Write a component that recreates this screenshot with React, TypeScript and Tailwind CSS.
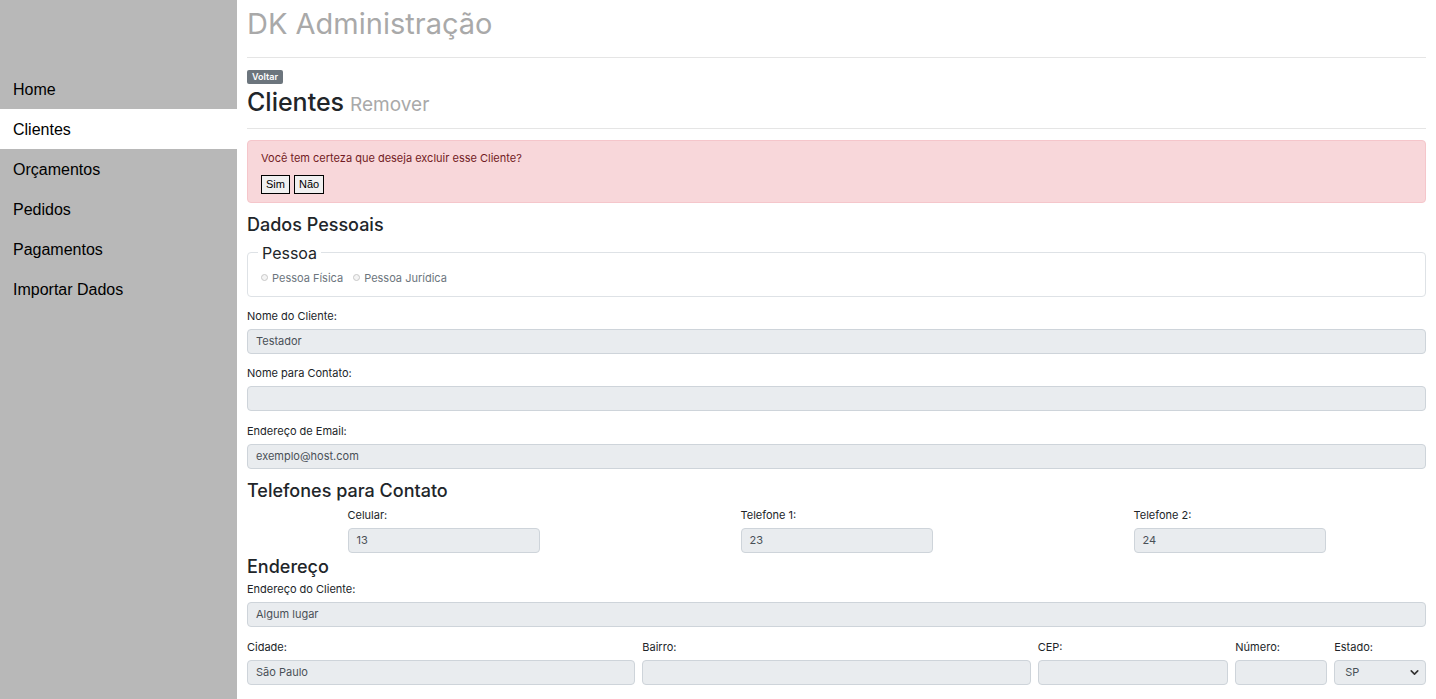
import { ChevronDown } from "lucide-react";

const NAV = ["Home", "Clientes", "Orçamentos", "Pedidos", "Pagamentos", "Importar Dados"];

function Field({ label, value, className = "" }: { label: string; value?: string; className?: string }) {
  return (
    <div className={className}>
      <div className="text-[11px] leading-[14px] text-[#212529] mb-[6px]">{label}</div>
      <div className="h-[25px] rounded-[4px] border border-[#ced4da] bg-[#e9ecef] px-[8px] flex items-center text-[11px] text-[#495057]">
        {value}
      </div>
    </div>
  );
}

export default function App() {
  return (
    <div className="flex min-h-[699px] font-['Inter',sans-serif] text-[#212529] bg-white">
      <aside className="w-[237px] shrink-0 bg-[#b8b8b8] pt-[69px] font-['Liberation_Sans',sans-serif]">
        {NAV.map((n) => (
          <div
            key={n}
            className={`h-[40px] flex items-center pl-[13px] pt-[2px] text-[16px] text-black ${n === "Clientes" ? "bg-white" : ""}`}
          >
            {n}
          </div>
        ))}
      </aside>

      <main className="flex-1 px-[10px] pb-4">
        <h1 className="text-[29px] leading-[38px] pt-[5px] text-[#a9a9a9] pb-[14px] border-b border-[#e5e5e5]">
          DK Administração
        </h1>

        <div className="mt-[12px] h-[14px] flex">
          <span className="inline-block bg-[#6c757d] text-white text-[9px] font-semibold leading-[14px] px-[5px] rounded-[2px]">
            Voltar
          </span>
        </div>
        <div className="flex items-baseline gap-[6px] pb-[8px] border-b border-[#e5e5e5] mt-[3px]">
          <span className="text-[25px] leading-[30px] font-medium text-[#212529]">Clientes</span>
          <span className="text-[19px] text-[#a9a9a9]">Remover</span>
        </div>

        <div className="mt-[11px] rounded-[4px] border border-[#f5c6cb] bg-[#f8d7da] px-[13px] pt-[10px] pb-[8px]">
          <div className="text-[11px] leading-[14px] text-[#721c24]">Você tem certeza que deseja excluir esse Cliente?</div>
          <div className="flex gap-[4px] mt-[10px] font-['Liberation_Sans',sans-serif]">
            <button className="h-[19px] px-[4px] border border-black bg-[#f0f0f0] text-[11px] text-black">Sim</button>
            <button className="h-[19px] px-[4px] border border-black bg-[#f0f0f0] text-[11px] text-black">Não</button>
          </div>
        </div>

        <h3 className="text-[18px] leading-[22px] font-medium mt-[11px]">Dados Pessoais</h3>

        <div className="relative mt-[16px] rounded-[4px] border border-[#dee2e6] h-[45px] px-[13px]">
          <div className="absolute -top-[10px] left-[10px] bg-white px-[4px] text-[16px] leading-[20px]">Pessoa</div>
          <div className="flex items-center gap-[10px] pt-[17px] text-[11px] text-[#6c757d]">
            <label className="flex items-center gap-[4px]">
              <span className="w-[7px] h-[7px] rounded-full border border-[#c8c8c8] bg-[#f4f4f4]" />
              Pessoa Física
            </label>
            <label className="flex items-center gap-[4px]">
              <span className="w-[7px] h-[7px] rounded-full border border-[#c8c8c8] bg-[#f4f4f4]" />
              Pessoa Jurídica
            </label>
          </div>
        </div>

        <Field label="Nome do Cliente:" value="Testador" className="mt-[12px]" />
        <Field label="Nome para Contato:" className="mt-[12px]" />
        <Field label="Endereço de Email:" value="exemplo@host.com" className="mt-[13px]" />

        <h3 className="text-[18px] leading-[22px] font-medium mt-[11px]">Telefones para Contato</h3>
        <div className="grid grid-cols-3 mt-[6px]">
          {[
            ["Celular:", "13"],
            ["Telefone 1:", "23"],
            ["Telefone 2:", "24"],
          ].map(([l, v]) => (
            <div key={l} className="flex justify-center">
              <Field label={l} value={v} className="w-[192px]" />
            </div>
          ))}
        </div>

        <h3 className="text-[18px] leading-[22px] font-medium mt-[3px]">Endereço</h3>
        <Field label="Endereço do Cliente:" value="Algum lugar" className="mt-[4px]" />

        <div className="grid grid-cols-12 gap-x-[7px] mt-[13px]">
          <Field label="Cidade:" value="São Paulo" className="col-span-4" />
          <Field label="Bairro:" className="col-span-4" />
          <Field label="CEP:" className="col-span-2" />
          <Field label="Número:" className="col-span-1" />
          <div className="col-span-1">
            <div className="text-[11px] leading-[14px] text-[#212529] mb-[6px]">Estado:</div>
            <div className="h-[25px] rounded-[4px] border border-[#ced4da] bg-[#e9ecef] pl-[10px] pr-[4px] flex items-center justify-between text-[11px] text-[#495057]">
              SP
              <ChevronDown size={13} strokeWidth={3} className="text-[#333]" />
            </div>
          </div>
        </div>
      </main>
    </div>
  );
}
